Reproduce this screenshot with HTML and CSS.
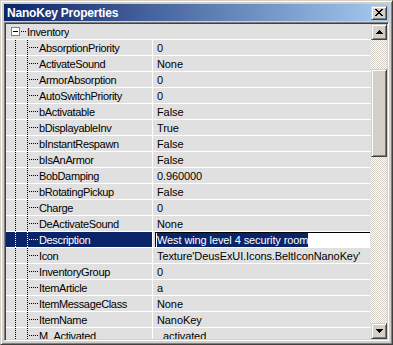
FILE: index.html
```html
<!DOCTYPE html>
<html lang="en">
<head>
    <meta charset="UTF-8">
    <title>NanoKey Properties</title>
    <link rel="stylesheet" href="styles.css">
</head>
<body>
    <div class="window">
        <div class="titlebar">
            <span class="title">NanoKey Properties</span>
            <div class="close">
                <svg width="8" height="7" viewBox="0 0 8 7"><path d="M0 0h2v1h-2z M6 0h2v1h-2z M1 1h2v1h-2z M5 1h2v1h-2z M2 2h4v1h-4z M3 3h2v1h-2z M2 4h4v1h-4z M1 5h2v1h-2z M5 5h2v1h-2z M0 6h2v1h-2z M6 6h2v1h-2z"/></svg>
            </div>
        </div>

        <div class="list">
            <div class="rows">
                <div class="row group">
                    <div class="name"><i class="expander"></i><i class="stub"></i><span>Inventory</span></div>
                </div>
                <div class="row"><div class="name"><i class="guide"></i><i class="elbow"></i><span>AbsorptionPriority</span></div><div class="value">0</div></div>
                <div class="row"><div class="name"><i class="guide"></i><i class="elbow"></i><span>ActivateSound</span></div><div class="value">None</div></div>
                <div class="row"><div class="name"><i class="guide"></i><i class="elbow"></i><span>ArmorAbsorption</span></div><div class="value">0</div></div>
                <div class="row"><div class="name"><i class="guide"></i><i class="elbow"></i><span>AutoSwitchPriority</span></div><div class="value">0</div></div>
                <div class="row"><div class="name"><i class="guide"></i><i class="elbow"></i><span>bActivatable</span></div><div class="value">False</div></div>
                <div class="row"><div class="name"><i class="guide"></i><i class="elbow"></i><span>bDisplayableInv</span></div><div class="value">True</div></div>
                <div class="row"><div class="name"><i class="guide"></i><i class="elbow"></i><span>bInstantRespawn</span></div><div class="value">False</div></div>
                <div class="row"><div class="name"><i class="guide"></i><i class="elbow"></i><span>bIsAnArmor</span></div><div class="value">False</div></div>
                <div class="row"><div class="name"><i class="guide"></i><i class="elbow"></i><span>BobDamping</span></div><div class="value">0.960000</div></div>
                <div class="row"><div class="name"><i class="guide"></i><i class="elbow"></i><span>bRotatingPickup</span></div><div class="value">False</div></div>
                <div class="row"><div class="name"><i class="guide"></i><i class="elbow"></i><span>Charge</span></div><div class="value">0</div></div>
                <div class="row"><div class="name"><i class="guide"></i><i class="elbow"></i><span>DeActivateSound</span></div><div class="value">None</div></div>
                <div class="row selected">
                    <div class="name"><i class="guide"></i><i class="elbow"></i><span>Description</span></div>
                    <div class="value"><div class="edit"><span class="sel">West wing level 4 security room</span></div></div>
                </div>
                <div class="row"><div class="name"><i class="guide"></i><i class="elbow"></i><span>Icon</span></div><div class="value">Texture'DeusExUI.Icons.BeltIconNanoKey'</div></div>
                <div class="row"><div class="name"><i class="guide"></i><i class="elbow"></i><span>InventoryGroup</span></div><div class="value">0</div></div>
                <div class="row"><div class="name"><i class="guide"></i><i class="elbow"></i><span>ItemArticle</span></div><div class="value">a</div></div>
                <div class="row"><div class="name"><i class="guide"></i><i class="elbow"></i><span>ItemMessageClass</span></div><div class="value">None</div></div>
                <div class="row"><div class="name"><i class="guide"></i><i class="elbow"></i><span>ItemName</span></div><div class="value">NanoKey</div></div>
                <div class="row"><div class="name"><i class="guide"></i><i class="elbow"></i><span>M_Activated</span></div><div class="value">_activated</div></div>
            </div>

            <div class="scrollbar">
                <div class="sb-btn">
                    <svg width="7" height="4" viewBox="0 0 7 4"><path d="M3 0h1v1h-1z M2 1h3v1h-3z M1 2h5v1h-5z M0 3h7v1h-7z"/></svg>
                </div>
                <div class="track">
                    <div class="thumb"></div>
                </div>
                <div class="sb-btn">
                    <svg width="7" height="4" viewBox="0 0 7 4"><path d="M0 0h7v1h-7z M1 1h5v1h-5z M2 2h3v1h-3z M3 3h1v1h-1z"/></svg>
                </div>
            </div>
        </div>
    </div>
</body>
</html>
```

FILE: styles.css
```css
body {
    margin: 0;
    font-family: "Liberation Sans", Arial, sans-serif;
    font-size: 11px;
    background-color: #d4d0c8;
}

.window {
    width: 393px;
    height: 345px;
    box-sizing: border-box;
    display: flex;
    flex-direction: column;
    padding: 3px;
    background-color: #d4d0c8;
    border: 1px solid;
    border-color: #d4d0c8 #404040 #404040 #d4d0c8;
    box-shadow: inset 1px 1px #ffffff, inset -1px -1px #808080;
}

.titlebar {
    height: 17px;
    display: flex;
    align-items: center;
    justify-content: space-between;
    padding: 0 2px 0 3px;
    background: linear-gradient(to right, #0a246a, #a6caf0);
}

.title {
    color: #ffffff;
    font-weight: bold;
    font-size: 12px;
    letter-spacing: -0.2px;
}

.close,
.sb-btn {
    box-sizing: border-box;
    display: flex;
    align-items: center;
    justify-content: center;
    background-color: #d4d0c8;
    border: 1px solid;
    border-color: #d4d0c8 #404040 #404040 #d4d0c8;
    box-shadow: inset 1px 1px #ffffff, inset -1px -1px #808080;
}

.close {
    width: 16px;
    height: 14px;
}

.list {
    flex: 1;
    display: flex;
    margin-top: 1px;
    min-height: 0;
    border: 1px solid;
    border-color: #808080 #ffffff #ffffff #808080;
    box-shadow: inset 1px 1px #404040, inset -1px -1px #d4d0c8;
    padding: 1px;
}

.rows {
    flex: 1;
    overflow: hidden;
    background-color: #e0e0e0;
}

.row {
    display: flex;
    height: 15px;
    line-height: 15px;
    border-bottom: 1px solid #ffffff;
    letter-spacing: -0.35px;
    color: #000000;
    white-space: nowrap;
}

.name {
    width: 146px;
    flex-shrink: 0;
    display: flex;
    align-items: stretch;
    padding-left: 9px;
    box-sizing: border-box;
    overflow: hidden;
}

.name span {
    padding-top: 1px;
}

.name i {
    display: block;
    flex-shrink: 0;
}

.guide {
    width: 12px;
    background: repeating-linear-gradient(to bottom, #000 0 1px, transparent 1px 2px) left top / 1px 100% no-repeat;
}

.elbow {
    width: 12px;
    background:
        repeating-linear-gradient(to bottom, #000 0 1px, transparent 1px 2px) left top / 1px 100% no-repeat,
        repeating-linear-gradient(to right, #000 0 1px, transparent 1px 2px) 2px 7px / 9px 1px no-repeat;
}

.group .name {
    width: auto;
    padding-left: 5px;
    align-items: center;
}

.group .name span {
    padding-top: 0;
    margin-top: 1px;
}

.expander {
    width: 9px;
    height: 9px;
    box-sizing: border-box;
    border: 1px solid #808080;
    background: linear-gradient(#000, #000) center / 5px 1px no-repeat, #ffffff;
}

.stub {
    width: 7px;
    align-self: stretch;
    background: repeating-linear-gradient(to right, #000 0 1px, transparent 1px 2px) 1px 7px / 6px 1px no-repeat;
}

.value {
    flex: 1;
    padding: 1px 0 0 4px;
    box-sizing: border-box;
    border-left: 1px solid #ffffff;
    letter-spacing: -0.1px;
    overflow: hidden;
}

.selected .name {
    background-color: #0a246a;
    color: #ffffff;
}

.selected .guide {
    background-image: repeating-linear-gradient(to bottom, #fff 0 1px, transparent 1px 2px);
}

.selected .elbow {
    background-image:
        repeating-linear-gradient(to bottom, #fff 0 1px, transparent 1px 2px),
        repeating-linear-gradient(to right, #fff 0 1px, transparent 1px 2px);
}

.selected .value {
    padding: 0 0 0 2px;
    display: flex;
}

.edit {
    flex: 1;
    height: 15px;
    box-sizing: border-box;
    margin-right: 1px;
    padding-left: 1px;
    line-height: 14px;
    background-color: #ffffff;
    border-left: 1px solid #000000;
    border-top: 1px solid #000000;
}

.sel {
    display: inline-block;
    background-color: #0a246a;
    color: #ffffff;
}

.scrollbar {
    width: 16px;
    display: flex;
    flex-direction: column;
}

.sb-btn {
    height: 16px;
}

.track {
    flex: 1;
    padding-top: 29px;
    background-color: #ffffff;
    background-image: conic-gradient(#d4d0c8 25%, #ffffff 0 50%, #d4d0c8 0 75%, #ffffff 0);
    background-size: 2px 2px;
}

.thumb {
    height: 88px;
    box-sizing: border-box;
    background-color: #d4d0c8;
    border: 1px solid;
    border-color: #d4d0c8 #404040 #404040 #d4d0c8;
    box-shadow: inset 1px 1px #ffffff, inset -1px -1px #808080;
}
```
